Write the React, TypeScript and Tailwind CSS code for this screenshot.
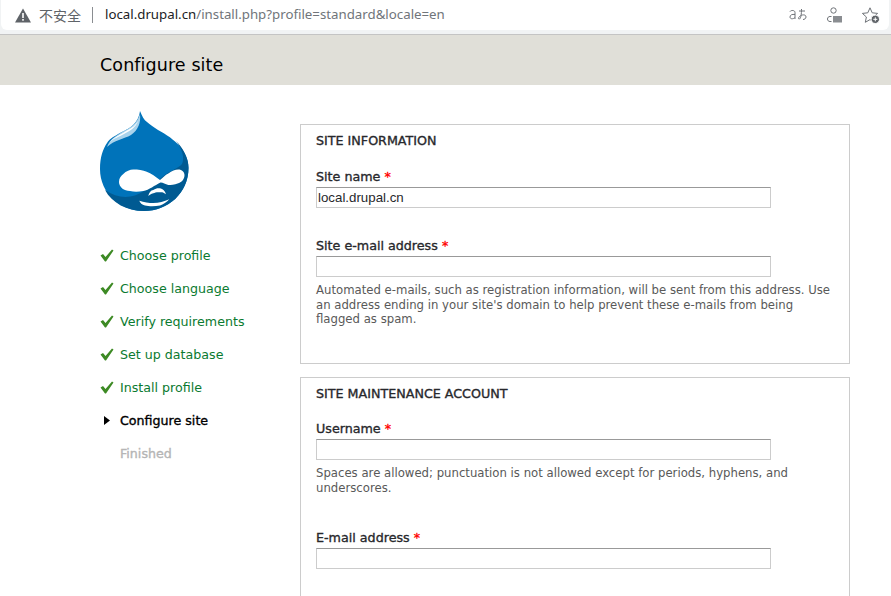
const Check = () => (
  <svg width="14" height="13" viewBox="0 0 14 13" className="shrink-0">
    <path d="M0.5 6.5 L3 5 L5.5 8 L12 0.5 L13.5 1.5 L6 12.5 L5 12.5 Z" fill="#3d8a24" />
  </svg>
);

const Logo = () => (
  <svg width="89" height="101" viewBox="0 0 89 101" className="block">
    <path d="M40 0 C42 5 44 9 47 11 C50 14 54 16 58 19 C75 28 88.5 40 88.5 57 C88.5 82 68 100 44 100 C20 100 0 82 0 58 C0 46 3 38 7 32 C10 27 15 25 20 22 C28 18 38 14 40 0 Z" fill="#0073ba" />
    <path d="M76 30 C82 38 85 47 82 53 C78 58 68 60 60 68 L44 80 C32 88 18 88 5 79 C12 92 27 100 44 100 C68 100 88.5 82 88.5 57 C88.5 47 83 37 76 30 Z" fill="#005a92" />
    <path d="M7 36 C10 28 16 25 22 21 C30 17 37 13 40 3 C41 12 38 19 31 24 C24 28 14 29 7 36 Z" fill="#a9d3ec" />
    <path d="M10 31 C14 26 20 24 26 20 C32 17 36 14 38 10 C36 16 30 20 24 23 C19 26 14 27 10 31 Z" fill="#ffffff" />
    <path d="M19 71 C19 67 21 65 23.3 63 C26 60 30 58.5 33.3 58.5 C38 58.5 43 59 46.7 60.7 C51 62 56 66 60 69 C63 67 65 64 68.3 62.5 C72 60 75 58.5 78.3 58.5 C82 58.5 84.5 61 84.5 64 C84.5 68 82 71 78.3 72.3 C74 74 71 74 68.3 74 C65 73 62 71 60 71.7 C55 74 49 79 43.3 80 C38 81 34 81 30 80 C24 80 19 76 19 71 Z" fill="#ffffff" />
    <path d="M48.3 85 C49 82 51 79 53.3 79 C56 77 58 77 60 77.3 C63 78 65 80 66 83.3 C64 81.5 62 81 60 81.3 C57 81 55 81.5 53.3 82.3 C51 83 49.5 84 48.3 85 Z" fill="#ffffff" />
    <path d="M39.3 89.7 C44 91.5 49 92 53.3 92 C59 92 64 90.5 69.3 88.3 C67 91 63 93.5 60 94.5 C55 95.5 49 95.5 45 94.5 C42 93.5 40 92 39.3 89.7 Z" fill="#ffffff" />
  </svg>
);

const Required = () => <span className="text-[#ff0000]" title="required"> *</span>;

const Field = ({ label, value, children, className = "" }: { label: string; value?: string; children?: React.ReactNode; className?: string }) => (
  <div className={className}>
    <div className="text-[12.7px] leading-[18px] text-[#27282c] [-webkit-text-stroke:0.35px]">
      {label}
      <Required />
    </div>
    <input
      readOnly
      value={value ?? ""}
      className="block mt-[1px] w-[455px] h-[21px] bg-white border border-[#ccc] border-t-[#999] px-[1px] text-[13.3px] text-[#27282c] [font-family:'Liberation_Sans',sans-serif] outline-none"
    />
    {children && <div className="mt-[6px] text-[11.7px] leading-[14.5px] text-[#595959] w-[520px]">{children}</div>}
  </div>
);

const steps = ["Choose profile", "Choose language", "Verify requirements", "Set up database", "Install profile"];

export default function App() {
  return (
    <div className="w-[891px] h-[596px] overflow-hidden bg-white [font-family:'DejaVu_Sans',sans-serif]">
      <div className="h-[35px] bg-[#f1f3f4] border-b border-[#c4c4c4]">
        <div className="h-[30px] ml-[1px] mr-[2px] bg-white rounded-b-[6px] flex items-center pl-[14px] pr-[9px] [font-family:'Noto_Sans','Noto_Sans_CJK_SC',sans-serif]">
          <svg width="16" height="15" viewBox="0 0 16 15" className="shrink-0">
            <path d="M8 0.5 L16 14.5 L0 14.5 Z" fill="#5f6368" />
            <rect x="7.2" y="5" width="1.6" height="5" fill="#fff" />
            <rect x="7.2" y="11" width="1.6" height="1.7" fill="#fff" />
          </svg>
          <span className="ml-[8px] text-[14px] text-[#5f6368]">不安全</span>
          <span className="ml-[11px] w-px h-[16px] bg-[#8a8d91]" />
          <span className="ml-[12px] text-[13.27px] whitespace-nowrap">
            <span className="text-[#202124]">local.drupal.cn</span>
            <span className="text-[#70757a]">/install.php?profile=standard&amp;locale=en</span>
          </span>
          <div className="ml-auto flex items-center gap-[20px] text-[#5f6368]">
            <svg width="18" height="12" viewBox="0 0 18 12" fill="none" stroke="#6f7378" strokeWidth="1">
              <path d="M1 2.5 C2 1 6 1 6 3.5 L6 10 M6 5.5 C3 5 1 6 1 8 C1 10 4 10.5 6 8.5" />
              <path d="M10 2 L16 2 M12.5 0 C12.5 5 12 9 10.5 10 C9.5 10.5 9 9 10.5 7.5 C12.5 5.5 17 5 17 8 C17 9.5 15.5 10.5 14 10.5" />
            </svg>
            <svg width="15" height="16" viewBox="0 0 15 16" fill="none">
              <circle cx="6.5" cy="3.5" r="2.7" stroke="#6f7378" />
              <path d="M4.5 9.5 L3 9.5 C1.5 9.5 0.5 10.5 0.5 12 C0.5 13.5 1.5 14.5 3 14.5 L4.5 14.5" stroke="#6f7378" />
              <rect x="6" y="9" width="9" height="6.5" fill="#8a8d91" />
            </svg>
            <svg width="18" height="17" viewBox="0 0 18 17" fill="none">
              <path d="M8 0.8 L10.2 5.8 L15.6 6.4 L11.6 10 L12.7 15.3 L8 12.6 L3.3 15.3 L4.4 10 L0.4 6.4 L5.8 5.8 Z" stroke="#6f7378" strokeLinejoin="round" />
              <circle cx="13.3" cy="12.3" r="4.2" fill="#5f6368" stroke="#fff" strokeWidth="1" />
              <path d="M13.3 10.3 V14.3 M11.3 12.3 H15.3" stroke="#fff" />
            </svg>
          </div>
        </div>
      </div>
      <header className="h-[50px] bg-[#e0dfd8] pl-[100px] pt-[10px] flex items-center">
        <h1 className="text-[17.5px] text-black tracking-[0.1px]">Configure site</h1>
      </header>
      <main className="flex pl-[100px] pt-[26px]">
        <aside className="w-[200px] shrink-0">
          <Logo />
          <ol className="mt-[27px] text-[12.65px] leading-[33px]">
            {steps.map((s) => (
              <li key={s} className="flex items-center gap-[6px] text-[#0b7a30]">
                <Check />
                {s}
              </li>
            ))}
            <li className="flex items-center text-black [-webkit-text-stroke:0.35px]">
              <span className="w-[20px] pl-[4px]">
                <svg width="6" height="9" viewBox="0 0 6 9" className="block"><path d="M0 0 L6 4.5 L0 9 Z" fill="#000" /></svg>
              </span>
              Configure site
            </li>
            <li className="pl-[20px] text-[#b5b5b5] [-webkit-text-stroke:0.35px]">Finished</li>
          </ol>
        </aside>
        <div className="w-[550px] mt-[13px]">
          <section className="h-[240px] border border-[#ccc] pt-[7px] px-[15px]">
            <h2 className="text-[12.7px] leading-[18px] text-[#27282c] [-webkit-text-stroke:0.35px]">SITE INFORMATION</h2>
            <Field label="Site name" value="local.drupal.cn" className="mt-[18px]" />
            <Field label="Site e-mail address" className="mt-[29px]">
              Automated e-mails, such as registration information, will be sent from this address. Use an address ending in your site's domain to help prevent these e-mails from being flagged as spam.
            </Field>
          </section>
          <section className="h-[240px] mt-[13px] border border-[#ccc] pt-[7px] px-[15px]">
            <h2 className="text-[12.7px] leading-[18px] text-[#27282c] [-webkit-text-stroke:0.35px]">SITE MAINTENANCE ACCOUNT</h2>
            <Field label="Username" className="mt-[17px]">
              Spaces are allowed; punctuation is not allowed except for periods, hyphens, and underscores.
            </Field>
            <Field label="E-mail address" className="mt-[34px]" />
          </section>
        </div>
      </main>
    </div>
  );
}
